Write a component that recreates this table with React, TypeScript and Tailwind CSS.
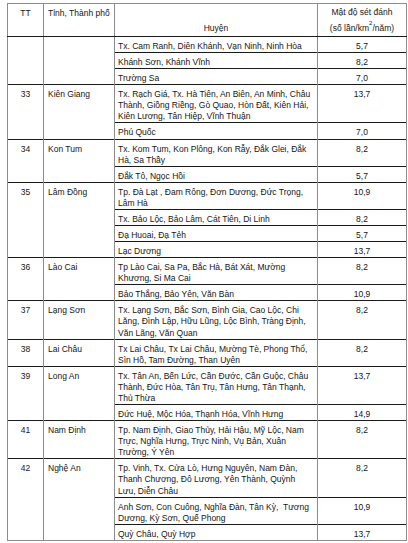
import React from 'react';

// Mỗi dòng: các dòng chữ của cột Huyện (ngắt dòng như bản gốc) và mật độ sét đánh
type Row = { lines: string[]; value: string };
type Group = { tt: string; province: string; rows: Row[] };

const groups: Group[] = [
  {
    tt: '',
    province: '',
    rows: [
      { lines: ['Tx. Cam Ranh, Diên Khánh, Vạn Ninh, Ninh Hòa'], value: '5,7' },
      { lines: ['Khánh Sơn, Khánh Vĩnh'], value: '8,2' },
      { lines: ['Trường Sa'], value: '7,0' },
    ],
  },
  {
    tt: '33',
    province: 'Kiên Giang',
    rows: [
      {
        lines: [
          'Tx. Rạch Giá, Tx. Hà Tiên, An Biên, An Minh, Châu',
          'Thành, Giồng Riềng, Gò Quao, Hòn Đất, Kiên Hải,',
          'Kiên Lương, Tân Hiệp, Vĩnh Thuận',
        ],
        value: '13,7',
      },
      { lines: ['Phú Quốc'], value: '7,0' },
    ],
  },
  {
    tt: '34',
    province: 'Kon Tum',
    rows: [
      { lines: ['Tx. Kom Tum, Kon Plông, Kon Rẫy, Đắk Glei, Đắk', 'Hà, Sa Thầy'], value: '8,2' },
      { lines: ['Đắk Tô, Ngọc Hồi'], value: '5,7' },
    ],
  },
  {
    tt: '35',
    province: 'Lâm Đồng',
    rows: [
      { lines: ['Tp. Đà Lạt , Đam Rông, Đơn Dương, Đức Trọng,', 'Lâm Hà'], value: '10,9' },
      { lines: ['Tx. Bảo Lộc, Bảo Lâm, Cát Tiên, Di Linh'], value: '8,2' },
      { lines: ['Đạ Huoai, Đạ Tẻh'], value: '5,7' },
      { lines: ['Lạc Dương'], value: '13,7' },
    ],
  },
  {
    tt: '36',
    province: 'Lào Cai',
    rows: [
      { lines: ['Tp Lào Cai, Sa Pa, Bắc Hà, Bát Xát, Mường', 'Khương, Si Ma Cai'], value: '8,2' },
      { lines: ['Bảo Thắng, Bảo Yên, Văn Bàn'], value: '10,9' },
    ],
  },
  {
    tt: '37',
    province: 'Lạng Sơn',
    rows: [
      {
        lines: [
          'Tx. Lạng Sơn, Bắc Sơn, Bình Gia, Cao Lộc, Chi',
          'Lăng, Đình Lập, Hữu Lũng, Lộc Bình, Tràng Định,',
          'Văn Lãng, Văn Quan',
        ],
        value: '8,2',
      },
    ],
  },
  {
    tt: '38',
    province: 'Lai Châu',
    rows: [
      {
        lines: ['Tx Lai Châu, Tx Lai Châu, Mường Tè, Phong Thổ,', 'Sìn Hồ, Tam Đường, Than Uyên'],
        value: '8,2',
      },
    ],
  },
  {
    tt: '39',
    province: 'Long An',
    rows: [
      {
        lines: [
          'Tx. Tân An, Bến Lức, Cần Đước, Cần Guộc, Châu',
          'Thành, Đức Hòa, Tân Trụ, Tân Hưng, Tân Thạnh,',
          'Thủ Thừa',
        ],
        value: '13,7',
      },
      { lines: ['Đức Huệ, Mộc Hóa, Thạnh Hóa, Vĩnh Hưng'], value: '14,9' },
    ],
  },
  {
    tt: '41',
    province: 'Nam Định',
    rows: [
      {
        lines: [
          'Tp. Nam Định, Giao Thủy, Hải Hậu, Mỹ Lộc, Nam',
          'Trực, Nghĩa Hưng, Trực Ninh, Vụ Bản, Xuân',
          'Trường, Ý Yên',
        ],
        value: '8,2',
      },
    ],
  },
  {
    tt: '42',
    province: 'Nghệ An',
    rows: [
      {
        lines: [
          'Tp. Vinh, Tx. Cửa Lò, Hưng Nguyên, Nam Đàn,',
          'Thanh Chương, Đô Lương, Yên Thành, Quỳnh',
          'Lưu, Diễn Châu',
        ],
        value: '8,2',
      },
      { lines: ['Anh Sơn, Con Cuông, Nghĩa Đàn, Tân Kỳ,  Tương', 'Dương, Kỳ Sơn, Quế Phong'], value: '10,9' },
      { lines: ['Quỳ Châu, Quỳ Hợp'], value: '13,7' },
    ],
  },
];

// Kẻ ngang đậm, kẻ dọc xám như bản scan
const cell = 'border-t border-t-[#1a1a1a] border-x border-x-[#8c8c8c] align-top pt-[4px] pb-0';

export default function App() {
  return (
    <div className="bg-white w-[408px] h-[543px] pt-[3px] pl-[7px] text-[#161616] font-['Liberation_Sans',Arial,sans-serif] text-[8.5px] leading-[11.08px]">
      <table className="table-fixed border-collapse w-[399px] border border-[#8c8c8c]">
        <colgroup>
          <col className="w-[36px]" />
          <col className="w-[71px]" />
          <col className="w-[203px]" />
          <col className="w-[89px]" />
        </colgroup>
        <thead>
          <tr className="h-[33px] leading-[16px]">
            <th className="font-normal align-top text-center border border-[#8c8c8c] border-b-[#1a1a1a] pt-[1px]">TT</th>
            <th className="font-normal align-top text-left pl-[4px] border border-[#8c8c8c] border-b-[#1a1a1a] pt-[1px]">
              Tỉnh, Thành phố
            </th>
            <th className="font-normal align-bottom text-center border border-[#8c8c8c] border-b-[#1a1a1a]">Huyện</th>
            <th className="font-normal align-middle text-center border border-[#8c8c8c] border-b-[#1a1a1a]">
              <div>Mật độ sét đánh</div>
              <div>
                (số lần/km<span className="text-[6px] align-top leading-none">2</span>/năm)
              </div>
            </th>
          </tr>
        </thead>
        <tbody>
          {groups.map((g, gi) =>
            g.rows.map((r, ri) => (
              <tr key={`${gi}-${ri}`}>
                {ri === 0 && (
                  <>
                    <td rowSpan={g.rows.length} className={`${cell} text-center`}>
                      {g.tt}
                    </td>
                    <td rowSpan={g.rows.length} className={`${cell} pl-[4px] whitespace-nowrap`}>
                      {g.province}
                    </td>
                  </>
                )}
                <td className={`${cell} pl-[3px] whitespace-pre`}>
                  {r.lines.map((l, li) => (
                    <div key={li}>{l}</div>
                  ))}
                </td>
                <td className={`${cell} text-center`}>{r.value}</td>
              </tr>
            ))
          )}
        </tbody>
      </table>
    </div>
  );
}
